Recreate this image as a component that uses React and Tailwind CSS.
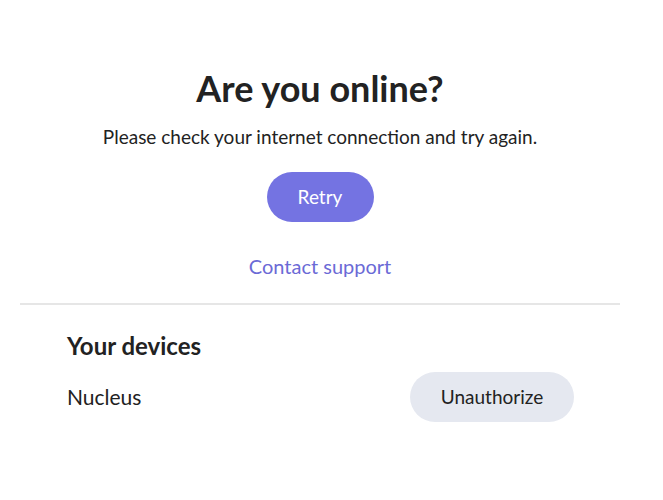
export default function App() {
  return (
    <div className="min-h-[500px] bg-white font-['Lato',sans-serif] text-[#222]">
      <div className="ml-5 w-[600px] pt-[64px]">
        <div className="flex flex-col items-center">
          <h1 className="text-[36px] font-bold leading-[48px] text-[#222]">Are you online?</h1>
          <p className="mt-[13px] text-[19px] leading-[24px] text-[#222]">
            Please check your internet connection and try again.
          </p>
          <button className="mt-[23px] h-[50px] w-[107px] rounded-full bg-[#7473e2] text-[19px] text-white">
            Retry
          </button>
          <a className="mt-[32px] text-[20px] leading-[24px] text-[#6b6ad6]">Contact support</a>
        </div>
        <div className="mt-[25px] h-[2px] bg-[#e6e6e6]" />
        <div className="px-[47px] pt-[26px]">
          <h2 className="text-[24px] font-bold leading-[30px] text-[#222]">Your devices</h2>
          <div className="mt-[11px] flex items-center justify-between">
            <span className="text-[21px] text-[#222]">Nucleus</span>
            <button className="mr-[-1px] h-[50px] w-[164px] rounded-full bg-[#e5e8f0] text-[19px] text-[#222]">
              Unauthorize
            </button>
          </div>
        </div>
      </div>
    </div>
  );
}
